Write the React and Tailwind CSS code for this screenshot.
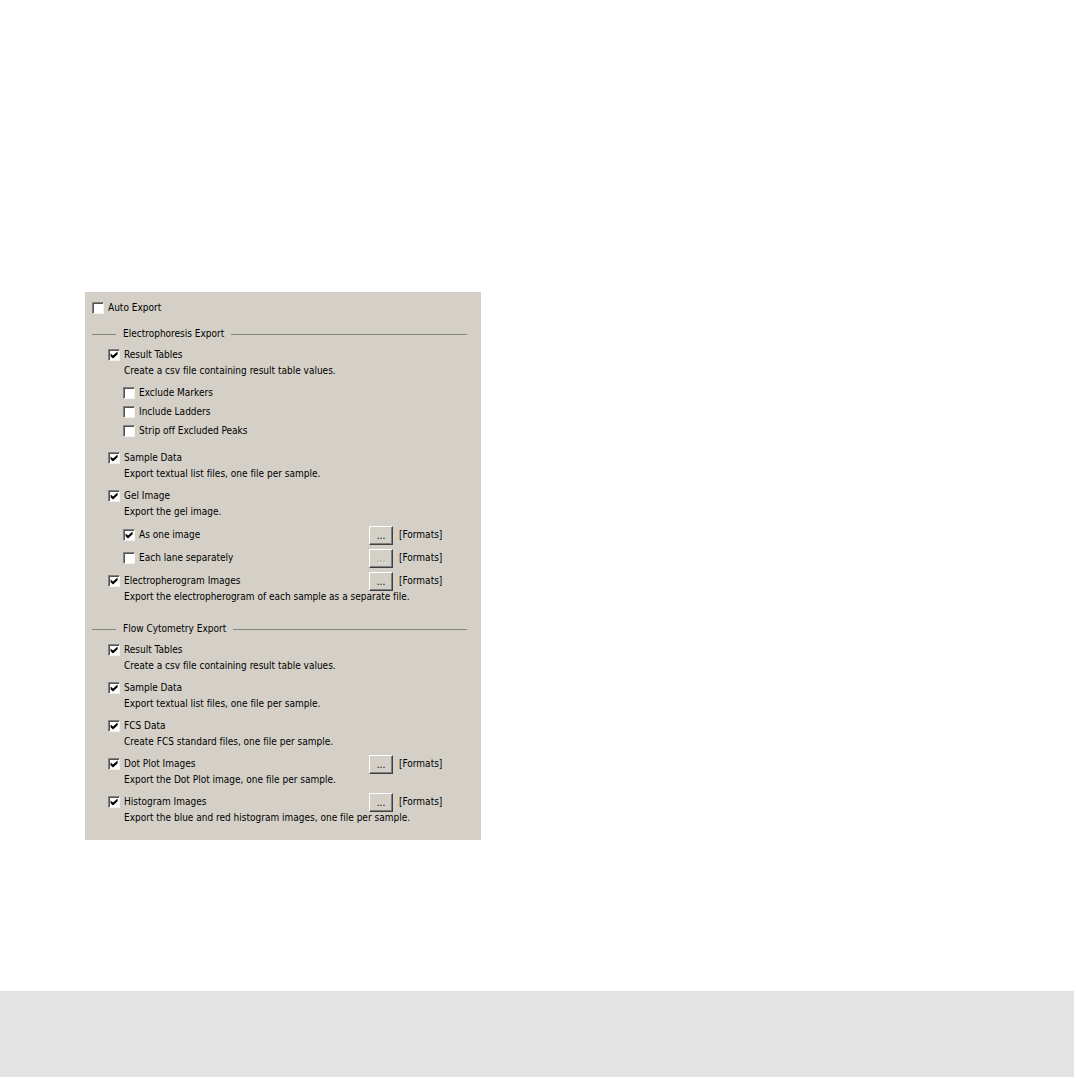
import React, { useState } from 'react';

const electrophoresisItems = [
    {
        id: 'ep-results',
        label: 'Result Tables',
        description: 'Create a csv file containing result table values.',
        checked: true,
        options: [
            { id: 'ep-markers', label: 'Exclude Markers' },
            { id: 'ep-ladders', label: 'Include Ladders' },
            { id: 'ep-peaks', label: 'Strip off Excluded Peaks' },
        ],
    },
    {
        id: 'ep-samples',
        label: 'Sample Data',
        description: 'Export textual list files, one file per sample.',
        checked: true,
    },
    {
        id: 'ep-gel',
        label: 'Gel Image',
        description: 'Export the gel image.',
        checked: true,
        options: [
            { id: 'ep-gel-one', label: 'As one image', checked: true, formats: true },
            { id: 'ep-gel-lanes', label: 'Each lane separately', formats: true },
        ],
    },
    {
        id: 'ep-images',
        label: 'Electropherogram Images',
        description: 'Export the electropherogram of each sample as a separate file.',
        checked: true,
        formats: true,
    },
];

const cytometryItems = [
    { id: 'fc-results', label: 'Result Tables', description: 'Create a csv file containing result table values.', checked: true },
    { id: 'fc-samples', label: 'Sample Data', description: 'Export textual list files, one file per sample.', checked: true },
    { id: 'fc-fcs', label: 'FCS Data', description: 'Create FCS standard files, one file per sample.', checked: true },
    { id: 'fc-dots', label: 'Dot Plot Images', description: 'Export the Dot Plot image, one file per sample.', checked: true, formats: true },
    { id: 'fc-histograms', label: 'Histogram Images', description: 'Export the blue and red histogram images, one file per sample.', checked: true, formats: true },
];

// Checkbox with its label, plus the formats button where the option has one
const OptionRow = ({ id, label, checked: initial = false, formats = false, className = 'h-5' }) => {
    const [checked, setChecked] = useState(initial);

    return (
        <div className={`flex items-center justify-between ${className}`}>
            <label htmlFor={id} className="flex items-center gap-1">
                <span className="grid size-3 shrink-0">
                    <input
                        id={id}
                        type="checkbox"
                        checked={checked}
                        onChange={(e) => setChecked(e.target.checked)}
                        className="peer col-start-1 row-start-1 size-3 appearance-none border border-t-[#808080] border-l-[#808080] border-r-[#f4f2ee] border-b-[#f4f2ee] bg-white shadow-[inset_1px_1px_0_#55534f]"
                    />
                    <svg viewBox="0 0 12 12" className="pointer-events-none invisible z-10 col-start-1 row-start-1 size-3 peer-checked:visible">
                        <path d="M2.6 4.4 5 6.6 9.6 2.4V5.2L5 9.4 2.6 7.2Z" fill="#000" />
                    </svg>
                </span>
                {label}
            </label>
            {formats && (
                <div className="flex w-[98px] shrink-0 items-center gap-[6px]">
                    <button
                        type="button"
                        disabled={!checked}
                        aria-label={`${label} formats`}
                        className="flex h-[19px] w-6 items-center justify-center border border-t-white border-l-white border-r-[#404040] border-b-[#404040] pt-[2px] text-black shadow-[inset_-1px_-1px_0_#808080] disabled:text-[#8c8a85] disabled:[text-shadow:1px_1px_0_#fff]"
                    >
                        ...
                    </button>
                    <span>[Formats]</span>
                </div>
            )}
        </div>
    );
};

const ExportItem = ({ description, options, ...row }) => (
    <div>
        <OptionRow {...row} />
        <p className="pl-4">{description}</p>
        {options && (
            <div className={options[0].formats ? 'mt-[7px] mb-[-3px] flex flex-col gap-[3px] pl-[15px]' : 'mt-[6px] mb-[2px] pl-[15px]'}>
                {options.map(option => (
                    <OptionRow key={option.id} {...option} className={option.formats ? 'h-5' : 'h-[19px]'} />
                ))}
            </div>
        )}
    </div>
);

const ExportSection = ({ title, items }) => (
    <section>
        <h2 className="mb-px flex h-5 items-center gap-[7px]">
            <span className="h-px w-6 bg-[#85837d]" />
            {title}
            <span className="h-px flex-1 bg-[#85837d]" />
        </h2>
        <div className="flex flex-col gap-[6px] pl-4">
            {items.map(item => <ExportItem key={item.id} {...item} />)}
        </div>
    </section>
);

export default function App() {
    return (
        <div className="flex min-h-screen flex-col justify-between bg-white pt-[292px] font-['DejaVu_Sans_Condensed','Liberation_Sans',sans-serif] text-[10px] leading-3 text-black [font-variant-ligatures:none]">
            <main className="ml-[85px] w-[396px] max-w-full bg-[#d4d0c8] pt-[6px] pr-[14px] pb-4 pl-[7px]">
                <OptionRow id="auto-export" label="Auto Export" />
                <div className="mt-[6px] flex flex-col gap-4">
                    <ExportSection title="Electrophoresis Export" items={electrophoresisItems} />
                    <ExportSection title="Flow Cytometry Export" items={cytometryItems} />
                </div>
            </main>
            <footer className="mr-[2px] mb-px h-[86px] bg-[#e3e3e3]" />
        </div>
    );
}
